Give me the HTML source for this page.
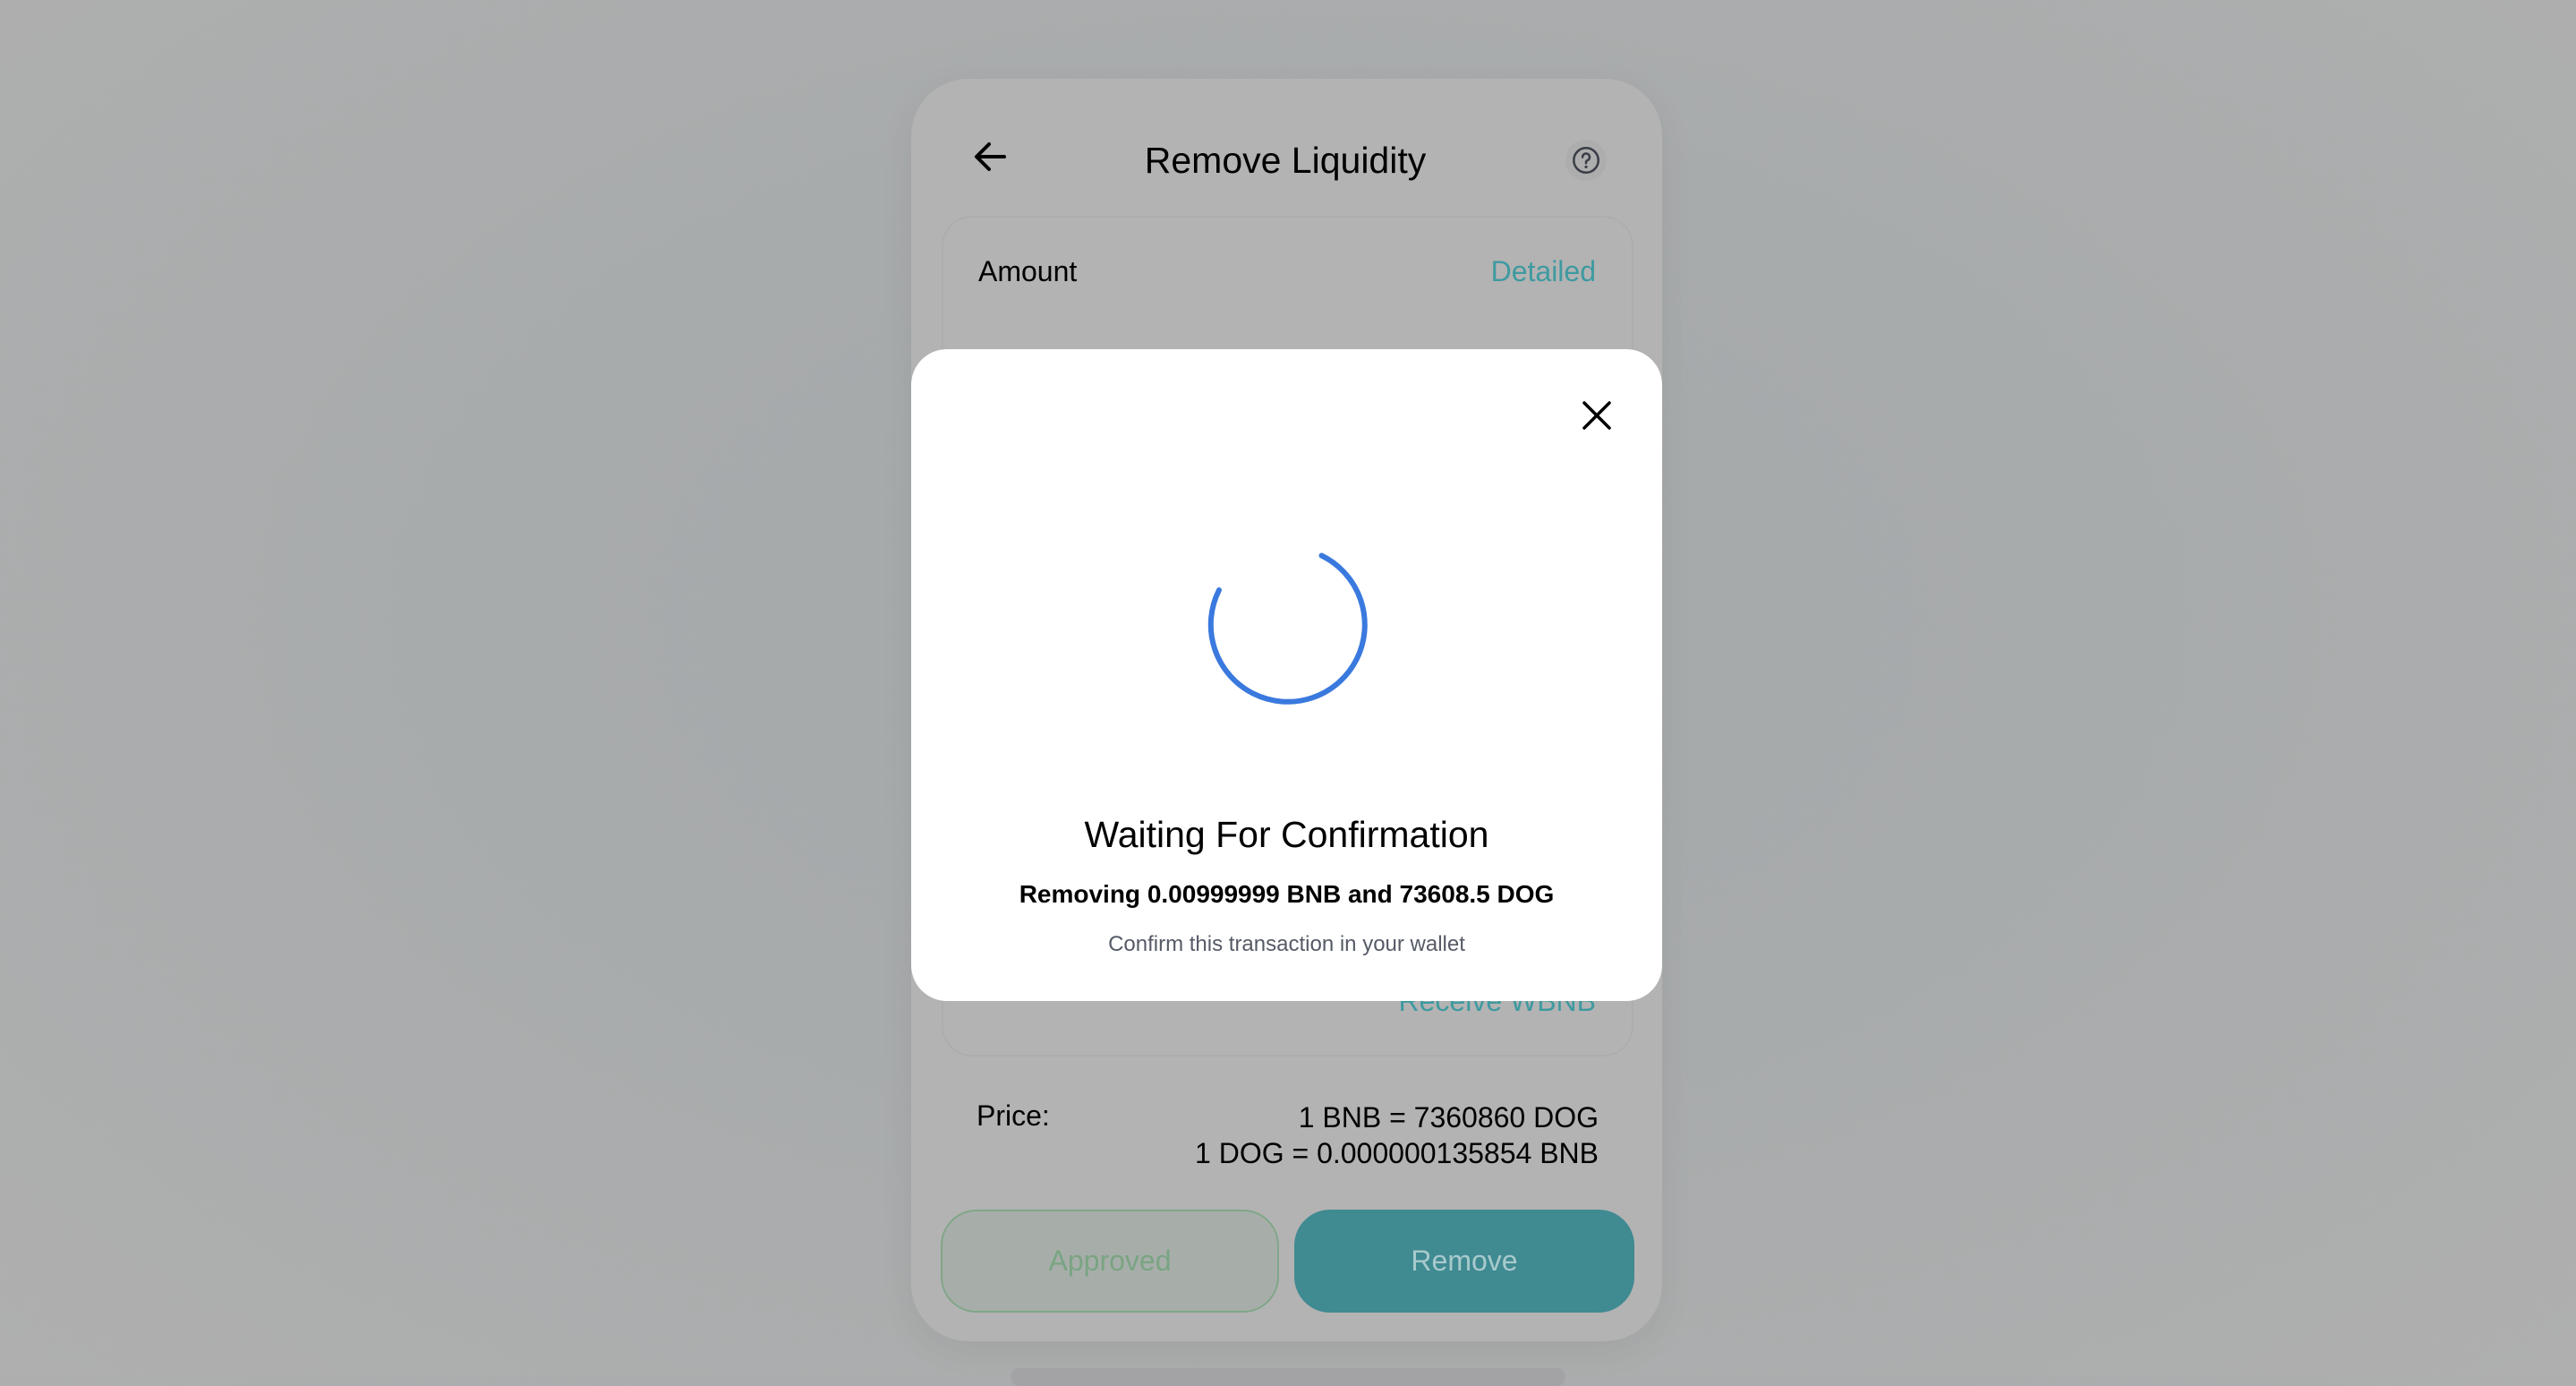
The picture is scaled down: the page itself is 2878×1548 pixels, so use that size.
<!DOCTYPE html>
<html><head><meta charset="utf-8"><style>
html,body{margin:0;padding:0}
body{width:2878px;height:1536px;overflow:hidden;position:relative;font-family:"Liberation Sans",sans-serif;
background:radial-gradient(ellipse at 50% 45%, #a5a9aa 0%, #a8abac 45%, #afafaf 100%);}
.card{position:absolute;left:1018px;top:88px;width:839px;height:1410px;border-radius:64px;background:#b3b3b3;box-shadow:0 10px 40px rgba(0,0,0,0.06)}
.abs{position:absolute;white-space:nowrap}
.inner{position:absolute;left:1052px;top:241px;width:773px;height:939px;border:2px solid #adadad;border-radius:34px;box-sizing:border-box}
.modal{position:absolute;left:1018px;top:390px;width:839px;height:728px;background:#fff;border-radius:40px}
.btn{position:absolute;top:1351px;height:115px;border-radius:40px;box-sizing:border-box;font-size:32px;display:flex;align-items:center;justify-content:center}
</style></head><body>
<div class="card"></div>
<svg class="abs" style="left:1086px;top:156px" width="40" height="40" viewBox="0 0 40 40"><path d="M36 19H6M19 5L5 19L19 33" fill="none" stroke="#000" stroke-width="4" stroke-linecap="round" stroke-linejoin="round"/></svg>
<div class="abs" style="left:1236px;width:400px;text-align:center;top:156px;font-size:41px;color:#000">Remove Liquidity</div>
<div class="abs" style="left:1749px;top:156px;width:46px;height:46px;border-radius:50%;background:#adadad"></div>
<svg class="abs" style="left:1756px;top:163px" width="32" height="32" viewBox="0 0 28 28"><circle cx="14" cy="14" r="12" fill="none" stroke="#3a3d47" stroke-width="2.2"/><path d="M10.5 11a3.5 3.5 0 1 1 4.5 3.3c-.8.3-1 .9-1 1.7v.8" fill="none" stroke="#3a3d47" stroke-width="2.2" stroke-linecap="round"/><circle cx="14" cy="20.5" r="1.4" fill="#3a3d47"/></svg>
<div class="inner"></div>
<div class="abs" style="left:1093px;top:285px;font-size:32px;color:#000">Amount</div>
<div class="abs" style="right:1095px;top:285px;font-size:32px;color:#3e9aa0">Detailed</div>
<div class="abs" style="right:1095px;top:1100px;font-size:32px;color:#3e9aa0">Receive WBNB</div>
<div class="abs" style="left:1091px;top:1228px;font-size:32px;color:#000">Price:</div>
<div class="abs" style="right:1092px;top:1228px;font-size:32px;color:#000;text-align:right;line-height:40px">1 BNB = 7360860 DOG<br>1 DOG = 0.000000135854 BNB</div>
<div class="btn" style="left:1051px;width:378px;background:#a7aea9;border:2px solid #80a688;color:#7aa483">Approved</div>
<div class="btn" style="left:1446px;width:380px;background:#408a92;color:#a8cacc">Remove</div>
<div class="abs" style="left:1129px;top:1528px;width:620px;height:20px;border-radius:10px;background:#a3a3a6"></div>
<div class="modal"></div>
<svg class="abs" style="left:1766px;top:446px" width="36" height="36" viewBox="0 0 36 36"><path d="M4 4L32 32M32 4L4 32" stroke="#000" stroke-width="3.5" stroke-linecap="round"/></svg>
<svg class="abs" style="left:1338px;top:602px" width="200" height="200" viewBox="0 0 200 200"><path d="M140.5 18.5 A86 86 0 1 1 26 57" fill="none" stroke="#3a79de" stroke-width="6" stroke-linecap="round" transform="translate(-2,0)"/></svg>
<div class="abs" style="left:1018px;width:839px;text-align:center;top:909px;font-size:41px;color:#000">Waiting For Confirmation</div>
<div class="abs" style="left:1018px;width:839px;text-align:center;top:983px;font-size:28px;font-weight:bold;color:#000">Removing 0.00999999 BNB and 73608.5 DOG</div>
<div class="abs" style="left:1018px;width:839px;text-align:center;top:1041px;font-size:24px;color:#555a66">Confirm this transaction in your wallet</div>
</body></html>
